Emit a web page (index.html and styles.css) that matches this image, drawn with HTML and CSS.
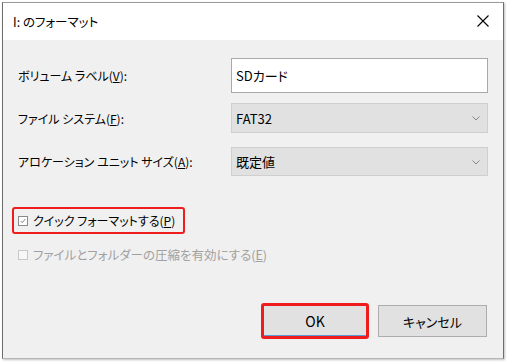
FILE: index.html
```html
<!DOCTYPE html>
<html lang="ja">
<head>
<meta charset="utf-8">
<link rel="stylesheet" href="styles.css">
</head>
<body>
<div class="window">
  <div class="titlebar">
    <span class="title">I: のフォーマット</span>
    <svg class="close" width="12" height="12" viewBox="0 0 12 12"><path d="M0.5 0.5 L11.5 11.5 M11.5 0.5 L0.5 11.5" stroke="#000" stroke-width="1.1" fill="none"/></svg>
  </div>
  <div class="content">
    <div class="row row1">
      <span class="label">ボリューム ラベル(<u>V</u>):</span>
      <div class="textbox">SDカード</div>
    </div>
    <div class="row row2">
      <span class="label">ファイル システム(<u>F</u>):</span>
      <div class="combo">FAT32<svg class="chev" width="8" height="5" viewBox="0 0 8 5"><path d="M0.5 0.5 L4 4 L7.5 0.5" stroke="#888" fill="none"/></svg></div>
    </div>
    <div class="row row3">
      <span class="label">アロケーション ユニット サイズ(<u>A</u>):</span>
      <div class="combo">既定値<svg class="chev" width="8" height="5" viewBox="0 0 8 5"><path d="M0.5 0.5 L4 4 L7.5 0.5" stroke="#888" fill="none"/></svg></div>
    </div>
    <div class="check highlight">
      <span class="box"><svg width="10" height="10" viewBox="0 0 10 10"><path d="M2 5 L4 7 L8 2.5" stroke="#666" stroke-width="1" fill="none"/></svg></span>
      <span>クイック フォーマットする(<u>P</u>)</span>
    </div>
    <div class="check disabled">
      <span class="box"></span>
      <span>ファイルとフォルダーの圧縮を有効にする(<u>E</u>)</span>
    </div>
    <div class="buttons">
      <div class="okwrap"><div class="btn ok">OK</div></div>
      <div class="btn">キャンセル</div>
    </div>
  </div>
</div>
</body>
</html>
```

FILE: styles.css
```css
html, body {
  margin: 0;
  padding: 0;
  background: #ffffff;
}
body {
  font-family: "Noto Sans CJK JP", "Noto Sans", sans-serif;
  font-feature-settings: "palt";
  font-size: 12px;
  color: #000;
  width: 507px;
  height: 362px;
  overflow: hidden;
}
.window {
  margin: 2px 3px 0 2px;
  width: 502px;
  height: 357px;
  box-sizing: border-box;
  border: 1px solid #9a9a9a;
  border-left-color: #6d6d6d;
  border-right-color: #6d6d6d;
  border-bottom-color: #b5b5b5;
  display: flex;
  flex-direction: column;
  box-shadow: 1px 1px 2px rgba(0,0,0,0.25);
}
.titlebar {
  height: 37px;
  background: #fff;
  display: flex;
  align-items: center;
  justify-content: space-between;
  padding: 0 14px 0 10px;
  flex: none;
}
.title {
  font-size: 12.5px;
  margin-top: -1px;
}
.close {
  display: block;
  margin-top: -2px;
}
.content {
  flex: 1;
  background: #f0f0f0;
  padding: 18px 15px 0 15px;
  display: flex;
  flex-direction: column;
}
.row {
  display: flex;
  align-items: center;
  justify-content: space-between;
}
.label {
  font-size: 12px;
  white-space: nowrap;
}
.row2 { margin-top: 10px; }
.row3 { margin-top: 14px; }
.textbox {
  width: 257px;
  height: 35px;
  box-sizing: border-box;
  background: #fff;
  border: 1px solid #a9a9a9;
  padding: 0 4px;
  display: flex;
  align-items: center;
  font-size: 13px;
}
.combo {
  width: 257px;
  height: 30px;
  box-sizing: border-box;
  background: #e1e1e1;
  border: 1px solid #cfcfcf;
  padding: 0 7px 0 4px;
  display: flex;
  align-items: center;
  justify-content: space-between;
  font-size: 13px;
}
.row3 .combo { height: 29px; }
.chev { display: block; margin-top: 1px; }
.check {
  display: flex;
  align-items: center;
  gap: 5px;
  font-size: 12px;
  white-space: nowrap;
}
.check .box {
  width: 10px;
  height: 10px;
  flex: none;
  box-sizing: border-box;
  border: 1px solid #8a8a8a;
  background: #fff;
  display: flex;
  align-items: center;
  justify-content: center;
}
.check .box svg { display: block; }
.highlight {
  margin-top: 31px;
  margin-left: -6px;
  width: 173px;
  height: 27px;
  box-sizing: border-box;
  border: 2px solid #ee1c1c;
  border-radius: 3px;
  padding-left: 4px;
}
.disabled {
  margin-top: 11px;
  color: #a0a0a0;
  font-size: 12.5px;
}
.disabled .box {
  border-color: #c8c8c8;
  background: #f7f7f7;
}
.buttons {
  margin-top: 39px;
  display: flex;
  justify-content: flex-end;
  align-items: center;
  gap: 9px;
  padding-right: 1px;
}
.okwrap {
  width: 108px;
  height: 36px;
  box-sizing: border-box;
  border: 3px solid #ee1c1c;
  border-radius: 3px;
  display: flex;
}
.btn {
  width: 109px;
  height: 32px;
  box-sizing: border-box;
  background: #e1e1e1;
  border: 1px solid #adadad;
  display: flex;
  align-items: center;
  justify-content: center;
  font-size: 13px;
}
.btn.ok {
  width: 100%;
  height: 100%;
  border: none;
  border-bottom: 1px solid #5a9bd5;
  font-size: 14px;
}
```
